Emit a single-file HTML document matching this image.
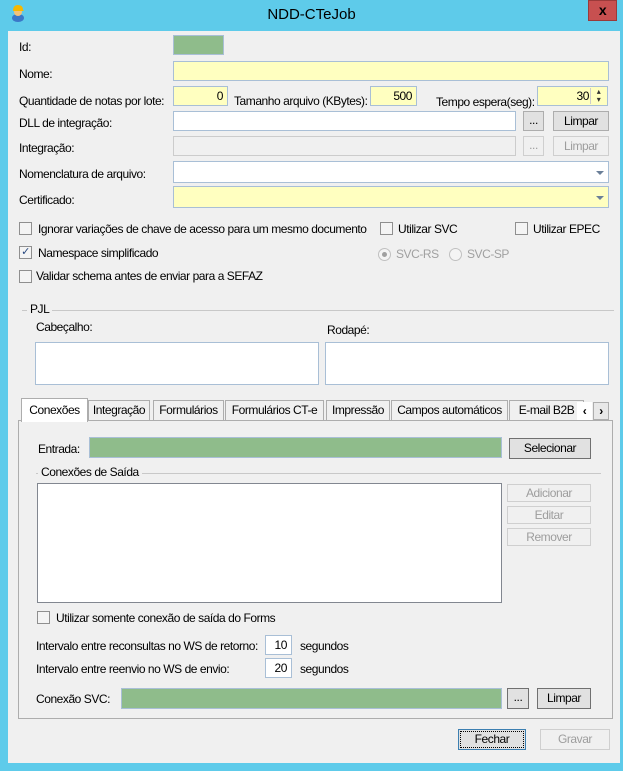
<!DOCTYPE html>
<html><head><meta charset="utf-8"><style>
*{box-sizing:border-box;margin:0;padding:0}
body{width:623px;height:771px;background:#5ecbea;position:relative;overflow:hidden;font-family:"Liberation Sans",sans-serif;font-size:12px;color:#000;letter-spacing:-0.45px}
.a{position:absolute;white-space:nowrap}
.client{position:absolute;left:8px;top:31px;width:612px;height:732px;background:#f0f0f0}
.tb{position:absolute;border:1px solid #a9bfd6;background:#fff}
.y{background:#ffffc0}
.g{background:#8fbc8b}
.dis{background:#f0f0f0;border-color:#ccc}
.btn{position:absolute;border:1px solid #adadad;background:#e1e1e1;text-align:center;line-height:18px}
.btnd{color:#9d9d9d;border-color:#cfcfcf;background:#f0f0f0}
.cb{position:absolute;width:13px;height:13px;border:1px solid #8f8f8f;background:#f4f4f4}
.line{position:absolute;height:1px;background:#c8c8c8}
.num{text-align:right;padding-right:4px;line-height:18px}
.dd{position:absolute;right:1px;top:1px;width:15px;bottom:1px}
.dd:after{content:"";position:absolute;left:4px;top:8px;border-left:4px solid transparent;border-right:4px solid transparent;border-top:4px solid #6a7f98}
.tab{position:absolute;top:400px;height:21px;border:1px solid #adadad;background:#f0f0f0;line-height:19px;text-align:center}
</style></head><body>
<svg class="a" style="left:10px;top:4px" width="16" height="18" viewBox="0 0 16 18"><ellipse cx="8" cy="14" rx="6" ry="4" fill="#3a78c8"/><circle cx="8" cy="8" r="4" fill="#f3c27a"/><path d="M3 7 Q3 1 8 1 Q13 1 13 6 L14 7 Z" fill="#f6b800"/></svg>
<div class="a" style="left:0;width:623px;top:6px;text-align:center;font-size:15px;letter-spacing:0">NDD-CTeJob</div>
<div class="a" style="left:588px;top:0;width:29px;height:21px;background:#c75050;border:1px solid #9a3a3a;color:#000;font-weight:bold;text-align:center;line-height:18px;font-size:14px">x</div>
<div class="client"></div>

<div class="a" style="left:19px;top:40px">Id:</div>
<div class="tb g" style="left:173px;top:35px;width:51px;height:20px"></div>
<div class="a" style="left:19px;top:67px">Nome:</div>
<div class="tb y" style="left:173px;top:61px;width:436px;height:20px"></div>
<div class="a" style="left:19px;top:94px">Quantidade de notas por lote:</div>
<div class="tb y num" style="left:173px;top:86px;width:55px;height:20px">0</div>
<div class="a" style="left:234px;top:94px">Tamanho arquivo (KBytes):</div>
<div class="tb y num" style="left:370px;top:86px;width:47px;height:20px">500</div>
<div class="a" style="left:436px;top:95px">Tempo espera(seg):</div>
<div class="tb y num" style="left:537px;top:86px;width:71px;height:20px;padding-right:18px">30</div>
<div class="a" style="left:590px;top:88px;width:16px;height:16px;border-left:1px solid #ccc;font-size:8px;line-height:8px;text-align:center;color:#333">&#9652;<br>&#9662;</div>
<div class="a" style="left:19px;top:116px">DLL de integração:</div>
<div class="tb" style="left:173px;top:111px;width:343px;height:20px"></div>
<div class="btn" style="left:523px;top:111px;width:21px;height:20px;line-height:16px">...</div>
<div class="btn" style="left:553px;top:111px;width:56px;height:20px">Limpar</div>
<div class="a" style="left:19px;top:141px;">Integração:</div>
<div class="tb dis" style="left:173px;top:136px;width:343px;height:20px"></div>
<div class="btn btnd" style="left:523px;top:136px;width:21px;height:20px;line-height:16px">...</div>
<div class="btn btnd" style="left:553px;top:136px;width:56px;height:20px">Limpar</div>
<div class="a" style="left:19px;top:167px">Nomenclatura de arquivo:</div>
<div class="tb" style="left:173px;top:161px;width:436px;height:22px"><div class="dd"></div></div>
<div class="a" style="left:19px;top:193px">Certificado:</div>
<div class="tb y" style="left:173px;top:186px;width:436px;height:22px"><div class="dd"></div></div>

<div class="cb" style="left:19px;top:222px"></div><div class="a" style="left:38px;top:222px">Ignorar variações de chave de acesso para um mesmo documento</div>
<div class="cb" style="left:380px;top:222px"></div><div class="a" style="left:398px;top:222px">Utilizar SVC</div>
<div class="cb" style="left:515px;top:222px"></div><div class="a" style="left:533px;top:222px">Utilizar EPEC</div>
<div class="cb" style="left:19px;top:246px;font-size:11px;line-height:11px;text-align:center;color:#2a4a80">&#10003;</div><div class="a" style="left:38px;top:246px">Namespace simplificado</div>
<div class="a" style="left:378px;top:248px;width:13px;height:13px;border-radius:50%;border:1px solid #c0c0c0;background:#f4f4f4"><div style="margin:3px;width:5px;height:5px;border-radius:50%;background:#a0a0a0"></div></div>
<div class="a" style="left:396px;top:247px;color:#a0a0a0">SVC-RS</div>
<div class="a" style="left:449px;top:248px;width:13px;height:13px;border-radius:50%;border:1px solid #c0c0c0;background:#f4f4f4"></div>
<div class="a" style="left:467px;top:247px;color:#a0a0a0">SVC-SP</div>
<div class="cb" style="left:19px;top:270px"></div><div class="a" style="left:36px;top:269px">Validar schema antes de enviar para a SEFAZ</div>

<div class="line" style="left:22px;top:310px;width:592px"></div>
<div class="a" style="left:27px;top:302px;background:#f0f0f0;padding:0 3px">PJL</div>
<div class="a" style="left:36px;top:320px">Cabeçalho:</div>
<div class="a" style="left:327px;top:323px">Rodapé:</div>
<div class="tb" style="left:35px;top:342px;width:284px;height:43px"></div>
<div class="tb" style="left:325px;top:342px;width:284px;height:43px"></div>

<div class="a" style="left:18px;top:420px;width:595px;height:299px;border:1px solid #adadad;background:#f0f0f0"></div>
<div class="a" style="left:21px;top:398px;height:24px;width:67px;border:1px solid #adadad;border-bottom:none;background:#fff;padding:4px 0 0 0;text-align:center;z-index:2">Conexões</div>
<div class="tab" style="left:88px;width:62px">Integração</div>
<div class="tab" style="left:153px;width:71px">Formulários</div>
<div class="tab" style="left:225px;width:99px">Formulários CT-e</div>
<div class="tab" style="left:326px;width:64px">Impressão</div>
<div class="tab" style="left:391px;width:117px">Campos automáticos</div>
<div class="tab" style="left:509px;width:75px">E-mail B2B</div>
<div class="a" style="left:577px;top:402px;width:15px;height:18px;background:#fff;text-align:center;line-height:18px;font-weight:bold">&#8249;</div>
<div class="a" style="left:593px;top:402px;width:16px;height:18px;border:1px solid #adadad;background:#e8e8e8;text-align:center;line-height:16px;font-weight:bold">&#8250;</div>

<div class="a" style="left:38px;top:442px">Entrada:</div>
<div class="tb g" style="left:89px;top:437px;width:413px;height:21px"></div>
<div class="btn" style="left:509px;top:438px;width:82px;height:21px;border-color:#707070;line-height:19px">Selecionar</div>
<div class="line" style="left:36px;top:473px;width:565px"></div>
<div class="a" style="left:38px;top:465px;background:#f0f0f0;padding:0 3px">Conexões de Saída</div>
<div class="a" style="left:37px;top:483px;width:465px;height:120px;border:1px solid #828790;background:#fff"></div>
<div class="btn btnd" style="left:507px;top:484px;width:84px;height:18px;line-height:16px">Adicionar</div>
<div class="btn btnd" style="left:507px;top:506px;width:84px;height:18px;line-height:16px">Editar</div>
<div class="btn btnd" style="left:507px;top:528px;width:84px;height:18px;line-height:16px">Remover</div>

<div class="cb" style="left:37px;top:611px"></div><div class="a" style="left:56px;top:611px">Utilizar somente conexão de saída do Forms</div>
<div class="a" style="left:36px;top:639px">Intervalo entre reconsultas no WS de retorno:</div>
<div class="tb num" style="left:265px;top:635px;width:27px;height:20px">10</div>
<div class="a" style="left:300px;top:639px">segundos</div>
<div class="a" style="left:36px;top:662px">Intervalo entre reenvio no WS de envio:</div>
<div class="tb num" style="left:265px;top:658px;width:27px;height:20px">20</div>
<div class="a" style="left:300px;top:662px">segundos</div>
<div class="a" style="left:36px;top:692px">Conexão SVC:</div>
<div class="tb g" style="left:121px;top:688px;width:381px;height:21px"></div>
<div class="btn" style="left:507px;top:688px;width:22px;height:21px;border-color:#707070;line-height:17px">...</div>
<div class="btn" style="left:537px;top:688px;width:54px;height:21px;border-color:#707070;line-height:19px">Limpar</div>

<div class="btn" style="left:458px;top:729px;width:68px;height:21px;border-color:#3c7fb1;line-height:19px;outline:1px dotted #000;outline-offset:-3px">Fechar</div>
<div class="btn btnd" style="left:540px;top:729px;width:70px;height:21px;line-height:19px">Gravar</div>
</body></html>
